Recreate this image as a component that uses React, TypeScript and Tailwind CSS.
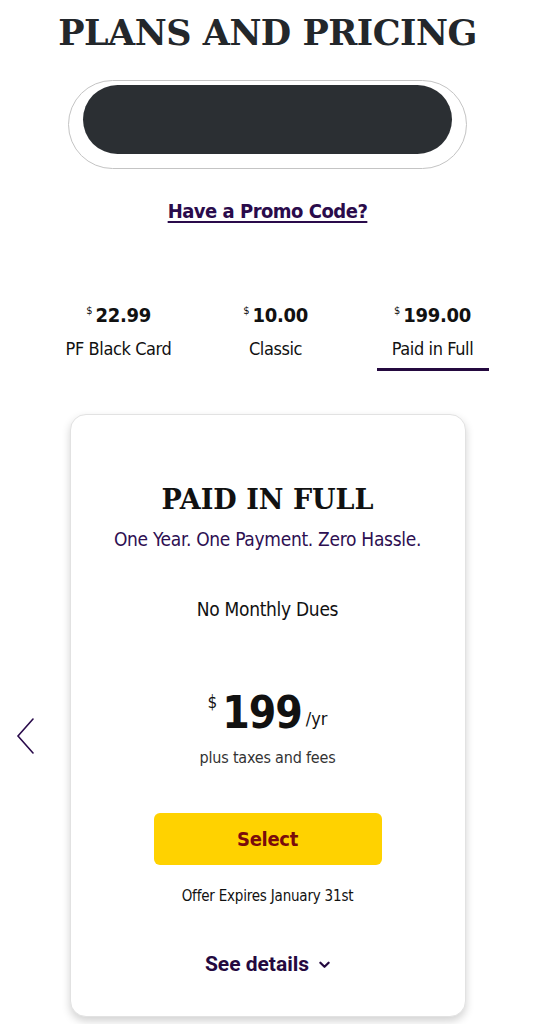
import React from 'react';

const narrow = "font-['DejaVu_Sans_Condensed',sans-serif]";
const slab = "font-['DejaVu_Serif',serif]";

type Plan = { price: string; name: string; active?: boolean };

const plans: Plan[] = [
    { price: '22.99', name: 'PF Black Card' },
    { price: '10.00', name: 'Classic' },
    { price: '199.00', name: 'Paid in Full', active: true },
];

const PlanTab: React.FC<{ plan: Plan }> = ({ plan }) => (
    <div className={`flex flex-col items-center ${narrow}`}>
        <div className="flex items-start text-[#111]">
            <span className="text-[11px] leading-none mt-[3px] mr-[3px]">$</span>
            <span className="text-[20px] font-bold leading-[26px] tracking-[-0.3px]">{plan.price}</span>
        </div>
        <div className="mt-[9px] text-[18px] leading-[24px] tracking-[-0.4px] text-[#111]">{plan.name}</div>
        <div className={`mt-[7px] h-[3px] w-[112px] ${plan.active ? 'bg-[#24093f]' : 'bg-transparent'}`} />
    </div>
);

export default function App() {
    return (
        <div className="min-h-[1024px] w-[535px] bg-white overflow-hidden">
            <h1 className={`${slab} pt-[12px] text-center text-[35px] font-bold leading-[42px] tracking-[-0.5px] text-[#23272b]`}>
                PLANS AND PRICING
            </h1>

            <div className="mx-auto mt-[26px] h-[89px] w-[399px] rounded-full border border-[#c4c4c4] px-[14px] pt-[4px]">
                <div className="h-[69px] w-full rounded-full bg-[#2b2f33]" />
            </div>

            <div className="mt-[27px] text-center">
                <a href="#" className={`${narrow} text-[20px] font-bold tracking-[-0.5px] text-[#2a0b4b] underline underline-offset-[3px]`}>
                    Have a Promo Code?
                </a>
            </div>

            <div className="ml-[40px] mr-[24px] mt-[76px] grid grid-cols-3">
                {plans.map((p) => (
                    <PlanTab key={p.name} plan={p} />
                ))}
            </div>

            <div className="relative mt-[43px]">
                <button className="absolute left-[11px] top-[300px] p-1" aria-label="Previous">
                    <svg viewBox="0 0 20 36" width="20" height="36" fill="none" stroke="#2a0b4b" strokeWidth="1.6" strokeLinecap="round">
                        <path d="M18 1 L3 18 L18 35" />
                    </svg>
                </button>

                <div className="mx-auto w-[396px] h-[603px] rounded-[16px] border border-[#e2e2e2] bg-white shadow-[0_4px_8px_rgba(0,0,0,0.18)] flex flex-col items-center">
                    <h2 className={`${slab} mt-[68px] text-[27px] font-bold leading-[34px] text-[#111]`}>PAID IN FULL</h2>
                    <p className={`${narrow} mt-[9px] text-[19px] leading-[26px] tracking-[-0.3px] text-[#2d0f52]`}>
                        One Year. One Payment. Zero Hassle.
                    </p>
                    <p className={`${narrow} mt-[44px] text-[19px] leading-[26px] tracking-[-0.3px] text-[#111]`}>No Monthly Dues</p>

                    <div className={`${narrow} mt-[66px] flex items-start text-[#111]`}>
                        <span className="text-[17px] leading-none mt-[6px] mr-[5px]">$</span>
                        <span className="text-[44px] font-bold leading-[50px] tracking-[-1px]">199</span>
                        <span className="text-[18px] leading-none mt-[22px] ml-[4px]">/yr</span>
                    </div>
                    <p className={`${narrow} mt-[9px] text-[16px] leading-[22px] tracking-[-0.2px] text-[#333]`}>plus taxes and fees</p>

                    <button className={`${narrow} mt-[44px] h-[52px] w-[228px] rounded-[6px] bg-[#ffd200] text-[20px] font-bold tracking-[-0.3px] text-[#7a0c0c]`}>
                        Select
                    </button>
                    <p className={`${narrow} mt-[20px] text-[15px] leading-[22px] tracking-[-0.2px] text-[#111]`}>Offer Expires January 31st</p>

                    <button className="mt-[42px] flex items-center gap-[10px] font-['Roboto',sans-serif] text-[21px] font-bold text-[#24093f]">
                        See details
                        <svg viewBox="0 0 12 8" width="11" height="8" fill="none" stroke="#24093f" strokeWidth="2.4" strokeLinecap="round" strokeLinejoin="round">
                            <path d="M1.5 1.5 L6 6 L10.5 1.5" />
                        </svg>
                    </button>
                </div>
            </div>
        </div>
    );
}
